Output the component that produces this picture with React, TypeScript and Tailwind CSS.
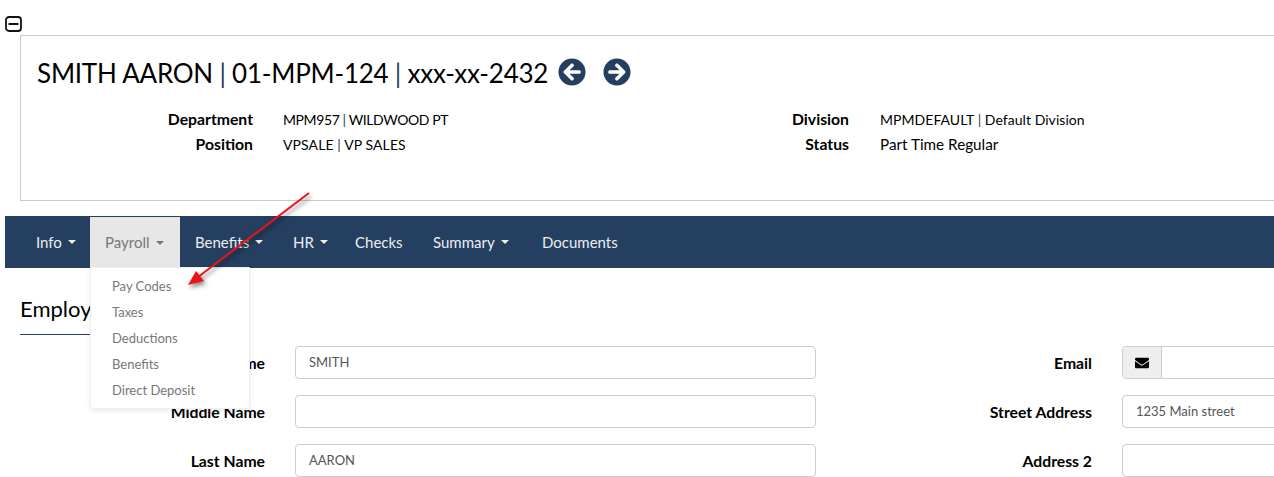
import React from 'react';
import { FaArrowCircleLeft, FaArrowCircleRight, FaEnvelope } from 'react-icons/fa';

const navItems = [
  { label: 'Info', width: 'w-[69px] ml-[16px]', caret: true },
  { label: 'Payroll', width: 'w-[90px]', caret: true, active: true },
  { label: 'Benefits', width: 'w-[98px]', caret: true },
  { label: 'HR', width: 'w-[62px]', caret: true },
  { label: 'Checks', width: 'w-[78px]' },
  { label: 'Summary', width: 'w-[109px]', caret: true },
  { label: 'Documents', width: 'w-[106px]' },
];

const menuItems = ['Pay Codes', 'Taxes', 'Deductions', 'Benefits', 'Direct Deposit'];

const Sep = () => <span className="text-[#243f5f]">|</span>;

const Label = ({ children }: { children: React.ReactNode }) => (
  <div className="h-[33px] text-right leading-[34px] whitespace-nowrap">{children}</div>
);

const Field = ({ value }: { value?: string }) => (
  <div className="h-[33px] border border-[#ccc] rounded-[4px] bg-white px-[13px] flex items-center text-[13px] font-normal text-[#555]">
    {value}
  </div>
);

const App: React.FC = () => {
  return (
    <div className="relative w-[1274px] h-[477px] overflow-hidden bg-white text-black font-['Lato','Liberation_Sans',sans-serif]">
      <div className="h-[35px] pt-[16px] pl-[5px]">
        <svg width="17" height="16" viewBox="0 0 17 16" className="block">
          <rect x="1" y="1" width="15" height="14" rx="3" fill="white" stroke="#111" strokeWidth="1.8" />
          <rect x="3.5" y="7" width="10" height="2" fill="#111" />
        </svg>
      </div>

      <div className="ml-[20px] w-[1280px] h-[166px] border border-[#ccc] pl-[16px] pt-[20px]">
        <div className="flex items-center h-[35px]">
          <h1 className="text-[26px] tracking-[-0.23px] leading-[35px] font-normal whitespace-nowrap">
            SMITH AARON <Sep /> 01-MPM-124 <Sep /> xxx-xx-2432
          </h1>
          <FaArrowCircleLeft className="ml-[10px] text-[#243f5f] mb-[4px]" size={28} />
          <FaArrowCircleRight className="ml-[17px] text-[#243f5f] mb-[4px]" size={28} />
        </div>
        <div className="flex mt-[16px] leading-[25px] text-[14px]">
          <div className="w-[216px] -mt-px text-right font-bold text-[15.75px]">
            <div>Department</div>
            <div>Position</div>
          </div>
          <div className="w-[509px] pl-[30px]">
            <div className="tracking-[-0.4px]">MPM957 <Sep /> WILDWOOD PT</div>
            <div className="tracking-[0.1px]">VPSALE <Sep /> VP SALES</div>
          </div>
          <div className="w-[87px] -mt-px text-right font-bold text-[15.75px]">
            <div>Division</div>
            <div>Status</div>
          </div>
          <div className="pl-[31px]">
            <div className="tracking-[0.05px]">MPMDEFAULT <Sep /> Default Division</div>
            <div className="text-[15.25px]">Part Time Regular</div>
          </div>
        </div>
      </div>

      <nav className="ml-[5px] mt-[15px] w-[1280px] h-[52px] bg-[#243f5f] flex items-stretch text-[15px] text-[#eee]">
        {navItems.map((item) => (
          <div
            key={item.label}
            className={`${item.width} flex items-center pl-[15px] whitespace-nowrap ${item.active ? 'bg-[#e7e7e7] text-[#777] mt-[1px]' : ''}`}
          >
            {item.label}
            {item.caret && (
              <span className="ml-[6px] w-0 h-0 border-x-[4px] border-x-transparent border-t-[4px] border-t-current" />
            )}
          </div>
        ))}
      </nav>

      <div className="absolute left-[90px] top-[267px] w-[160px] h-[142px] z-10 bg-white border border-[#eee] rounded-b-[4px] shadow-[0_2px_5px_rgba(0,0,0,0.08)] pt-[5px] text-[13px] text-[#777]">
        {menuItems.map((m) => (
          <div key={m} className="h-[26px] pl-[21px] leading-[26px]">{m}</div>
        ))}
      </div>

      <svg className="absolute left-0 top-0 z-20 pointer-events-none drop-shadow-[2px_3px_2px_rgba(0,0,0,0.45)]" width="1274" height="477">
        <line x1="309" y1="193" x2="198" y2="277" stroke="#f01018" strokeWidth="2" />
        <path d="M188 285 L196 271 L204 281 Z" fill="#f01018" />
      </svg>

      <div className="ml-[20px] mt-[26px] w-[150px] h-[41px] border-b border-[#243f5f] text-[22px] leading-[30px]">
        Employee
      </div>

      <div className="flex mt-[11px] text-[15.75px] font-bold">
        <div className="w-[816px] shrink-0 grid grid-cols-[265px_521px] gap-x-[30px] gap-y-[16px]">
          <Label>First Name</Label>
          <Field value="SMITH" />
          <Label>Middle Name</Label>
          <Field />
          <Label>Last Name</Label>
          <Field value="AARON" />
        </div>
        <div className="grid grid-cols-[276px_300px] gap-x-[30px] gap-y-[16px] shrink-0">
          <Label>Email</Label>
          <div className="h-[33px] border border-[#ccc] rounded-[4px] flex">
            <div className="w-[39px] bg-[#eee] border-r border-[#ccc] flex items-center justify-center rounded-l-[4px]">
              <FaEnvelope size={14} />
            </div>
          </div>
          <Label>Street Address</Label>
          <Field value="1235 Main street" />
          <Label>Address 2</Label>
          <Field />
        </div>
      </div>
    </div>
  );
};

export default App;
